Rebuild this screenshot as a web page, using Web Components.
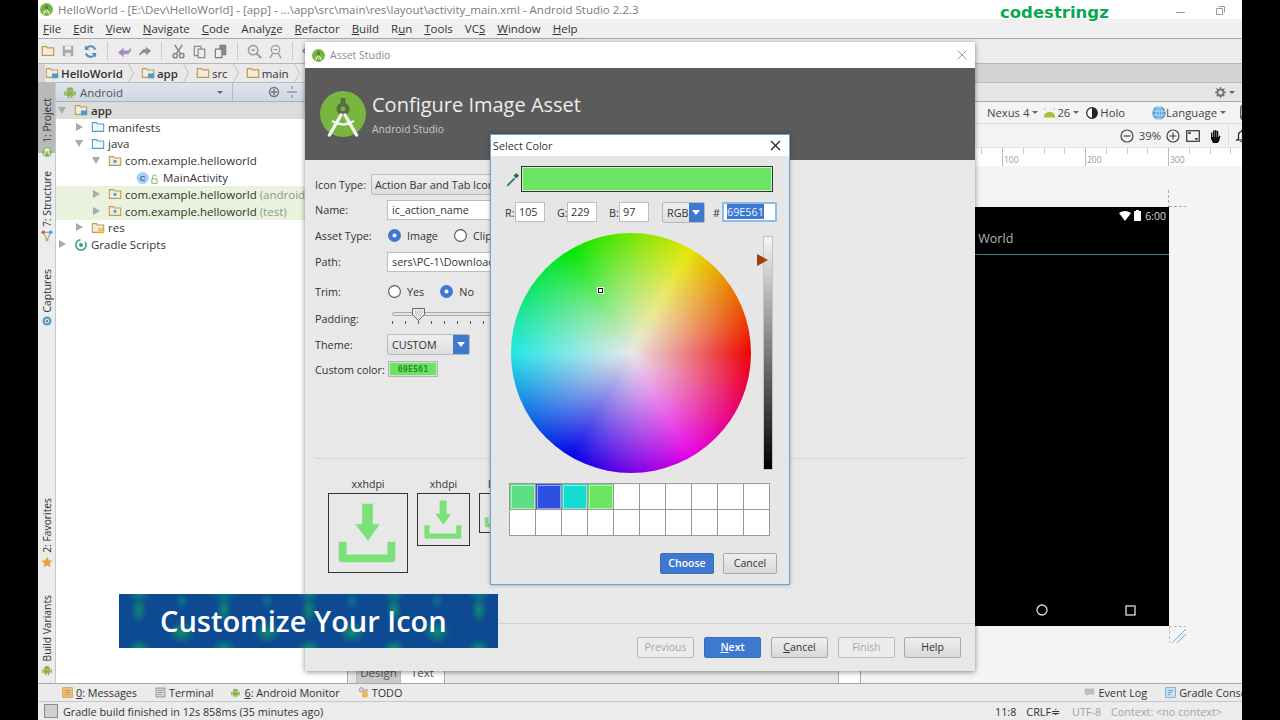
<!DOCTYPE html>
<html>
<head>
<meta charset="utf-8">
<title>Android Studio</title>
<style>
    html, body { margin: 0; height: 720px; overflow: hidden; background: #000; }
    body { font: 11.5px "Open Sans", "Liberation Sans", sans-serif; color: #333; }
    u { text-underline-offset: 1px; }
</style>
</head>
<body>
<android-studio>
    <title-bar>HelloWorld - [E:\Dev\HelloWorld] - [app] - ...\app\src\main\res\layout\activity_main.xml - Android Studio 2.2.3</title-bar>
    <menu-bar>
        <span><u>F</u>ile</span><span><u>E</u>dit</span><span><u>V</u>iew</span><span><u>N</u>avigate</span><span><u>C</u>ode</span><span>Analy<u>z</u>e</span><span><u>R</u>efactor</span><span><u>B</u>uild</span><span>R<u>u</u>n</span><span><u>T</u>ools</span><span>VC<u>S</u></span><span><u>W</u>indow</span><span><u>H</u>elp</span>
    </menu-bar>
    <main-toolbar></main-toolbar>
    <bread-crumbs>
        <crumb-item icon="module" strong>HelloWorld</crumb-item>
        <crumb-item icon="module" strong>app</crumb-item>
        <crumb-item icon="folder">src</crumb-item>
        <crumb-item icon="folder">main</crumb-item>
        <crumb-item icon="res">res</crumb-item>
        <crumb-item icon="package">layout</crumb-item>
    </bread-crumbs>
    <work-area>
        <side-strip side="left">
            <strip-tab side="left" icon="android-gray" selected style="height:70px;padding-top:15px">1: Project</strip-tab>
            <strip-tab side="left" icon="structure" style="margin-top:18px">7: Structure</strip-tab>
            <strip-tab side="left" icon="captures" style="margin-top:27px">Captures</strip-tab>
            <strip-tab side="left" icon="star" style="margin-top:auto">2: Favorites</strip-tab>
            <strip-tab side="left" icon="android" style="margin-top:27px;margin-bottom:7px">Build Variants</strip-tab>
        </side-strip>
        <project-panel>
            <tree-row arrow="down" icon="module" indent="0" selected><b style="font-weight:600">app</b></tree-row>
            <tree-row arrow="right" icon="folder-blue" indent="1">manifests</tree-row>
            <tree-row arrow="down" icon="folder-blue" indent="1">java</tree-row>
            <tree-row arrow="down" icon="package" indent="2">com.example.helloworld</tree-row>
            <tree-row icon="class" indent="3">MainActivity</tree-row>
            <tree-row arrow="right" icon="package" indent="2" tinted>com.example.helloworld <span style="color:#8d9a8d">(androidTest)</span></tree-row>
            <tree-row arrow="right" icon="package" indent="2" tinted>com.example.helloworld <span style="color:#8d9a8d">(test)</span></tree-row>
            <tree-row arrow="right" icon="res" indent="1">res</tree-row>
            <tree-row arrow="right" icon="gradle" indent="0">Gradle Scripts</tree-row>
        </project-panel>
        <xml-editor></xml-editor>
        <layout-designer></layout-designer>
        <side-strip side="right">
            <strip-tab side="right" icon="gradle" light style="height:58px;padding-top:7px">Gradle</strip-tab>
            <strip-tab side="right" icon="android" selected style="height:64px;padding-top:7px">Preview</strip-tab>
            <strip-tab side="right" icon="android" style="margin-top:auto;margin-bottom:9px">Android Model</strip-tab>
        </side-strip>
    </work-area>
    <tool-windows>
        <tool-item icon="messages" style="margin-left:24px"><u>0</u>: Messages</tool-item>
        <tool-item icon="terminal" style="margin-left:18px">Terminal</tool-item>
        <tool-item icon="android" style="margin-left:17px"><u>6</u>: Android Monitor</tool-item>
        <tool-item icon="todo" style="margin-left:18px">TODO</tool-item>
        <tool-item icon="eventlog" style="margin-left:auto">Event Log</tool-item>
        <tool-item icon="console" style="margin-left:18px;margin-right:26px">Gradle Console</tool-item>
    </tool-windows>
    <status-bar>
        <ui-icon name="square" size="14" style="margin:0 5px 0 6px"></ui-icon>
        <span>Gradle build finished in 12s 858ms (35 minutes ago)</span>
        <span style="margin-left:auto">11:8</span>
        <span style="margin-left:10px">CRLF≑</span>
        <span style="margin-left:12px;color:#a3a3a3">UTF-8</span>
        <span style="margin-left:10px;color:#a3a3a3">Context: &lt;no context&gt;</span>
        <ui-icon name="lock-dark" size="11" style="margin-left:23px"></ui-icon>
        <ui-icon name="robot" size="14" style="margin:0 3px 0 9px"></ui-icon>
    </status-bar>
</android-studio>

<asset-studio>
    <form-row label="Icon Type:"><ui-select style="width:190px;margin-left:-16px" plain>Action Bar and Tab Icons</ui-select></form-row>
    <form-row label="Name:"><ui-input style="width:190px">ic_action_name</ui-input></form-row>
    <form-row label="Asset Type:"><ui-radio checked>Image</ui-radio><ui-radio style="margin-left:16px">Clip Art</ui-radio></form-row>
    <form-row label="Path:"><ui-input style="width:190px">sers\PC-1\Downloads\icon.png</ui-input></form-row>
    <form-row label="Trim:"><ui-radio>Yes</ui-radio><ui-radio checked style="margin-left:16px">No</ui-radio></form-row>
    <form-row label="Padding:"><tick-slider></tick-slider></form-row>
    <form-row label="Theme:"><ui-select style="width:83px">CUSTOM</ui-select></form-row>
    <form-row label="Custom color:"><color-chip>69E561</color-chip></form-row>
    <density-previews slot="previews">
        <density-box size="80">xxhdpi</density-box>
        <density-box size="53">xhdpi</density-box>
        <density-box size="40">hdpi</density-box>
    </density-previews>
    <ui-button slot="buttons" disabled style="width:57px"> Previous</ui-button>
    <ui-button slot="buttons" primary style="width:57px;margin-left:10px"><u>N</u>ext</ui-button>
    <ui-button slot="buttons" style="width:57px;margin-left:10px"><u>C</u>ancel</ui-button>
    <ui-button slot="buttons" disabled style="width:57px;margin-left:10px">Finish</ui-button>
    <ui-button slot="buttons" style="width:57px;margin-left:9px">Help</ui-button>
</asset-studio>

<select-color>
    <ui-button slot="buttons" primary style="width:54px">Choose</ui-button>
    <ui-button slot="buttons" style="width:54px;margin-left:9px">Cancel</ui-button>
</select-color>

<title-banner>Customize Your Icon</title-banner>

<script>
const ICONS = {
    logo: `<svg viewBox="0 0 46 46"><circle cx="23" cy="23" r="23" fill="#78b63f"/><circle cx="23" cy="18" r="6.5" fill="#55703f"/><rect x="20.5" y="7" width="5" height="6" fill="#55703f"/><circle cx="23" cy="18" r="2.4" fill="#78b63f"/><path d="M21 24 9.5 44M25 24l11.500 20" stroke="#f2f2f2" stroke-width="3.400" fill="none" stroke-linecap="round"/><path d="M12 30q11 7 22 0" stroke="#f2f2f2" stroke-width="2.400" fill="none"/></svg>`,
    folder: `<svg viewBox="0 0 16 16"><path d="M1.500 3h5l1 1.500h7V13h-13z" fill="#f4ecd8" stroke="#bd9a55" stroke-width="1.400"/></svg>`,
    save: `<svg viewBox="0 0 16 16"><path d="M2 2h12v12H2z" fill="#a9a9a9"/><path d="M4.500 2.500h7v4h-7z" fill="#eee"/><path d="M5 10h6v4H5z" fill="#e6e6e6"/></svg>`,
    sync: `<svg viewBox="0 0 16 16" fill="none" stroke="#4d90c8" stroke-width="2.200"><path d="M13 6a5.500 5.500 0 0 0-9.500-1.500"/><path d="M3 10a5.500 5.500 0 0 0 9.500 1.500"/><path d="M2 1.500v5h5z" fill="#4d90c8" stroke="none"/><path d="M14 14.500v-5H9z" fill="#4d90c8" stroke="none"/></svg>`,
    undo: `<svg viewBox="0 0 16 16"><path d="M1 9l6-5v3h5l3-3v3l-3 4H7v3z" fill="#a78bc4"/></svg>`,
    redo: `<svg viewBox="0 0 16 16"><path d="M15 8 9 3v3H6L1 12l1 1 4-3h3v3z" fill="#8d8d8d"/></svg>`,
    cut: `<svg viewBox="0 0 16 16" fill="none" stroke="#808080" stroke-width="1.500"><path d="M4 1l6 9M12 1 6 10"/><circle cx="4.500" cy="12.500" r="2.300"/><circle cx="11.500" cy="12.500" r="2.300"/></svg>`,
    copy: `<svg viewBox="0 0 16 16" fill="#eee" stroke="#8a8a8a" stroke-width="1.300"><path d="M2.500 2.500h7v10h-7z"/><path d="M6.500 5.500h7v9h-7z"/></svg>`,
    paste: `<svg viewBox="0 0 16 16" stroke="#777" stroke-width="1.200"><path d="M7.500 1.500h6v10h-6z" fill="#9a8a6a"/><path d="M2.500 5.500h7v9h-7z" fill="#eee"/></svg>`,
    find: `<svg viewBox="0 0 16 16" fill="none" stroke="#9a9a9a" stroke-width="1.600"><circle cx="6.500" cy="6.500" r="5"/><path d="M10 10l5 5" stroke-width="2.200"/><path d="M4.500 6.500h4"/></svg>`,
    replace: `<svg viewBox="0 0 16 16" fill="none" stroke="#9a9a9a" stroke-width="1.400"><circle cx="8" cy="6" r="4.500"/><path d="M5 10l-3 5M11 10l3 5M6 6h4"/></svg>`,
    back: `<svg viewBox="0 0 16 16"><path d="M1 8l7-6v3.500h7v5H8V14z" fill="#c5e3f5" stroke="#3f94cf" stroke-width="1.500"/></svg>`,
    forward: `<svg viewBox="0 0 16 16"><path d="M15 8 8 2v3.500H1v5h7V14z" fill="#eee" stroke="#9a9a9a" stroke-width="1.500"/></svg>`,
    search: `<svg viewBox="0 0 16 16" fill="none" stroke="#8a8a8a" stroke-width="1.800"><circle cx="6.500" cy="6.500" r="5"/><path d="M10.500 10.500l4.500 4.500" stroke-width="2.400"/></svg>`,
    avatar: `<svg viewBox="0 0 14 14"><path d="M0 0h14v14H0z" fill="#c9c9c9"/><circle cx="7" cy="5" r="3" fill="#f6f6f6"/><path d="M2 14q0-5 5-5t5 5z" fill="#f6f6f6"/></svg>`,
    module: `<svg viewBox="0 0 16 16"><path d="M1.500 3h5l1 1.500h7V13h-13z" fill="#f4ecd8" stroke="#bd9a55" stroke-width="1.200"/><path d="M8 8.500h7v5.500H8z" fill="#4f9bd0"/></svg>`,
    res: `<svg viewBox="0 0 16 16"><path d="M1.500 3h5l1 1.500h7V13h-13z" fill="#f4ecd8" stroke="#bd9a55" stroke-width="1.200"/><path d="M8.500 8h6v6h-6z" fill="#e5a823"/><path d="M10.500 8v6M12.500 8v6M8.500 10h6M8.500 12h6" stroke="#f9e7b5" stroke-width=".6"/></svg>`,
    "folder-blue": `<svg viewBox="0 0 16 16"><path d="M1.500 3h5l1 1.500h7V13h-13z" fill="#f4f9fc" stroke="#4c9ccb" stroke-width="1.200"/></svg>`,
    package: `<svg viewBox="0 0 16 16"><path d="M1.500 3h5l1 1.500h7V13h-13z" fill="#f4ecd8" stroke="#bd9a55" stroke-width="1.200"/><rect x="6.500" y="7" width="3" height="3" fill="#3f94cf"/></svg>`,
    class: `<svg viewBox="0 0 26 16"><circle cx="8" cy="8" r="7" fill="#a4d2f0"/><text x="8" y="11" font-size="9" font-weight="700" text-anchor="middle" font-family="Liberation Sans" fill="#2c6f9f">C</text><path d="M18.500 9h6v5h-6z" fill="#fff" stroke="#6dac5a"/><path d="M19.500 9V6.500a2 2 0 0 1 4 0" fill="none" stroke="#6dac5a"/></svg>`,
    gradle: `<svg viewBox="0 0 16 16" fill="none"><circle cx="8" cy="8" r="5.800" stroke="#3fae6a" stroke-width="2" stroke-dasharray="26 6"/><circle cx="8" cy="8" r="2.200" fill="#3f8fb0"/></svg>`,
    android: `<svg viewBox="0 0 16 16" fill="#8eb34a"><path d="M4 6.500a4 4 0 0 1 8 0z"/><rect x="4" y="7" width="8" height="5.500"/><rect x="1.500" y="7" width="2" height="5" rx="1"/><rect x="12.500" y="7" width="2" height="5" rx="1"/><rect x="5.200" y="12" width="2" height="3" rx="1"/><rect x="8.800" y="12" width="2" height="3" rx="1"/></svg>`,
    "android-gray": `<svg viewBox="0 0 16 16"><circle cx="8" cy="8" r="6.500" fill="#86b56a"/><path d="M4 7a4 4 0 0 1 8 0z" fill="#e8efe0"/><path d="M4 12 7 7M12 12 9 7" stroke="#e8efe0" stroke-width="1.500"/></svg>`,
    structure: `<svg viewBox="0 0 16 16" fill="none" stroke="#7a8a96" stroke-width="1.200"><path d="M3 3l5 10 5-10z"/><circle cx="3" cy="3" r="2.400" fill="#d65a4a" stroke="none"/><circle cx="13" cy="3" r="2.400" fill="#4f9bd0" stroke="none"/><circle cx="8" cy="13" r="2.400" fill="#e2a23a" stroke="none"/></svg>`,
    captures: `<svg viewBox="0 0 16 16"><circle cx="8" cy="8" r="6" fill="#5a9bc6"/><circle cx="8" cy="8" r="3" fill="#d8e8f2"/><circle cx="8" cy="8" r="1.500" fill="#4a7fa0"/></svg>`,
    star: `<svg viewBox="0 0 16 16"><path d="M8 1l2.200 4.700 5 .6-3.700 3.500 1 5.100L8 12.400l-4.500 2.500 1-5.100L.8 6.300l5-.6z" fill="#e2a13a"/></svg>`,
    messages: `<svg viewBox="0 0 16 16"><rect x="1" y="1" width="14" height="14" fill="#ecc27c" stroke="#c99540"/><path d="M4 5h8M4 8h8M4 11h8" stroke="#b98a40"/></svg>`,
    terminal: `<svg viewBox="0 0 16 16"><rect x="1.500" y="1.500" width="13" height="13" fill="#d8d8d8" stroke="#777"/><path d="M4 5h8M4 8h8M4 11h5" stroke="#888"/></svg>`,
    todo: `<svg viewBox="0 0 16 16"><circle cx="5" cy="4" r="3" fill="#ddd" stroke="#777"/><rect x="6" y="6" width="8" height="9" fill="#e6b25a"/><path d="M6 3h9v3H6z" fill="#bbb"/></svg>`,
    eventlog: `<svg viewBox="0 0 16 16"><path d="M1 2h14v9H7l-3 3v-3H1z" fill="#bdbdbd"/></svg>`,
    console: `<svg viewBox="0 0 16 16"><rect x="1" y="1" width="14" height="14" fill="#cfe3f0" stroke="#4f9bd0"/><path d="M4 5h8M4 8h6M4 11h4" stroke="#5b7f96"/></svg>`,
    square: `<svg viewBox="0 0 14 14"><rect x=".5" y=".5" width="13" height="13" fill="#cfcfcf" stroke="#8a8a8a"/></svg>`,
    "lock-dark": `<svg viewBox="0 0 11 11"><rect x="2" y="5" width="7" height="5.500" fill="#666"/><path d="M3.500 5V3a2 2 0 0 1 4 0" fill="none" stroke="#888"/></svg>`,
    robot: `<svg viewBox="0 0 14 14" fill="none" stroke="#888"><path d="M3.500 5a3.500 3.500 0 0 1 7 0v3h-7z"/><path d="M2 8.500h10v3H2zM5 11.500V14M9 11.500V14"/><path d="M5 5h1M8 5h1" stroke-width="1.500"/></svg>`,
    gear: `<svg viewBox="0 0 16 16"><circle cx="8" cy="8" r="4.500" fill="none" stroke="#777" stroke-width="3"/><path d="M8 0v16M0 8h16M2.300 2.300l11.400 11.400M13.700 2.300 2.300 13.700" stroke="#777" stroke-width="2" stroke-dasharray="3 10"/></svg>`,
    pin: `<svg viewBox="0 0 14 14" fill="none" stroke="#777" stroke-width="1.300"><path d="M1 7h7M6 4.500 8.500 7 6 9.500"/><path d="M12 2v10" stroke-width="2"/></svg>`,
    "android-flat": `<svg viewBox="0 0 16 12" fill="#a6c03a"><path d="M1 12a7 7 0 0 1 14 0z"/><path d="M3 3 1.500 .5M13 3l1.500-2.500" stroke="#a6c03a"/></svg>`,
    holo: `<svg viewBox="0 0 12 12"><circle cx="6" cy="6" r="5.300" fill="#fff" stroke="#222" stroke-width="1.200"/><path d="M6 .7a5.300 5.300 0 0 1 0 10.600z" fill="#222"/></svg>`,
    globe: `<svg viewBox="0 0 14 14" fill="none" stroke="#d8eefa" stroke-width=".8"><circle cx="7" cy="7" r="6.800" fill="#4f9fd8" stroke="none"/><ellipse cx="7" cy="7" rx="3" ry="6.500"/><path d="M7 .5v13M1 5h12M1 9h12"/></svg>`,
    phone: `<svg viewBox="0 0 12 16" fill="none" stroke="#444" stroke-width="1.300"><rect x="1" y="1" width="10" height="14" rx="1.500"/><path d="M1 12.500h10"/></svg>`,
    minus: `<svg viewBox="0 0 14 14" fill="none" stroke="#444" stroke-width="1.200"><circle cx="7" cy="7" r="6"/><path d="M3.500 7h7"/></svg>`,
    plus: `<svg viewBox="0 0 14 14" fill="none" stroke="#444" stroke-width="1.200"><circle cx="7" cy="7" r="6"/><path d="M3.500 7h7M7 3.500v7"/></svg>`,
    fit: `<svg viewBox="0 0 14 14" fill="none" stroke="#333" stroke-width="1.200"><rect x=".7" y="1.700" width="12.600" height="10.600"/><path d="M3 5V4h2M11 9v1H9" stroke-width="1.400"/></svg>`,
    hand: `<svg viewBox="0 0 14 14" fill="#111"><path d="M3 3.500h1.400V8H5V1.500h1.500V8h.4V1h1.500v7h.4V2h1.500v6.500l1-2 1.200.6L11 12.500 9.500 14H5L3 10z"/></svg>`,
    bell: `<svg viewBox="0 0 14 14" fill="none" stroke="#222" stroke-width="1.200"><path d="M3.500 10V6a3.500 3.500 0 0 1 7 0v4l1.500 1H2z"/><path d="M7 .5V2M5.500 12.500h3"/></svg>`,
    eyedrop: `<svg viewBox="0 0 16 16"><path d="M2 14 9.500 6.500l1 1L3 15z" fill="#4d9a72" stroke="#2e6b4e" stroke-width=".8"/><path d="M9 4l3-3 3 3-3 3z" fill="#2e6b4e"/></svg>`
};

function define(name, markup) {
    customElements.define(name, class extends HTMLElement {
        constructor() {
            super();
            this.attachShadow({ mode: "open" }).innerHTML = markup;
        }
    });
}

customElements.define("ui-icon", class extends HTMLElement {
    constructor() {
        super();
        this.attachShadow({ mode: "open" });
    }

    connectedCallback() {
        let size = this.getAttribute("size") || 16;
        this.shadowRoot.innerHTML = `
            <style>
                :host { display: inline-flex; flex: none; width: ${size}px; height: ${size}px; }
                svg { width: 100%; height: 100%; display: block; }
            </style>
            ${ICONS[this.getAttribute("name")] || ""}
        `;
    }
});

define("caret-down", `
    <style>
        :host { display: inline-block; flex: none; width: 0; height: 0; margin-left: 3px;
            border: 3px solid transparent; border-top: 3px solid #666; border-bottom: 0; }
    </style>`);

define("android-studio", `
    <style>
        :host {
            display: grid;
            grid-template-rows: 19px 19px 26px 19px 600px 19px 18px;
            width: 1204px;
            height: 720px;
            margin-left: 38px;
            background: #ececec;
            overflow: hidden;
        }
    </style>
    <slot></slot>`);

define("title-bar", `
    <style>
        :host { display: flex; align-items: center; background: #fff; color: #7a7a7a; padding-left: 2px; position: relative; }
        span { margin-left: 5px; white-space: nowrap; }
        b { position: absolute; left: 962px; top: 3px; font: 700 16.5px "DejaVu Sans", sans-serif; color: #0aa84f; line-height: 20px; }
        .controls { margin-left: auto; display: flex; align-items: center; }
        svg { display: block; }
    </style>
    <ui-icon name="logo" size="13"></ui-icon>
    <span><slot></slot></span>
    <b>codestringz</b>
    <div class="controls">
        <svg width="12" height="12" style="margin-right:29px" stroke="#999" fill="none"><path d="M2 8.500h9"/></svg>
        <svg width="12" height="12" style="margin-right:29px" stroke="#999" fill="#fff"><path d="M3.500 2.500h6v6"/><path d="M1.500 4.500h6v6h-6z"/></svg>
        <svg width="12" height="12" style="margin-right:14px" stroke="#999"><path d="M1 1l10 10M11 1 1 11"/></svg>
    </div>`);

define("menu-bar", `
    <style>
        :host { display: flex; align-items: center; background: #f0f0f0; padding-left: 5px; gap: 10.500px; color: #333; font-size: 11.500px; white-space: nowrap; }
        ::slotted(span) { margin-right: 1.500px; }
    </style>
    <slot></slot>`);

define("main-toolbar", `
    <style>
        :host { display: flex; align-items: center; background: #ececec; border-top: 1px solid #aaa; border-bottom: 1px solid #b5b5b5; padding-left: 3px; gap: 6px; }
        i { width: 1px; height: 18px; background: #ccc; margin: 0 3px; }
        ui-icon { margin-right: 0; }
        .end { margin-left: auto; display: flex; gap: 7px; margin-right: 3px; align-items: center; }
    </style>
    <ui-icon name="folder" size="14"></ui-icon><ui-icon name="save" size="14"></ui-icon><ui-icon name="sync" size="15" style="margin-left:2px"></ui-icon><i></i>
    <ui-icon name="undo" size="15"></ui-icon><ui-icon name="redo" size="14"></ui-icon><i></i>
    <ui-icon name="cut" size="15"></ui-icon><ui-icon name="copy" size="15"></ui-icon><ui-icon name="paste" size="15"></ui-icon><i></i>
    <ui-icon name="find" size="15"></ui-icon><ui-icon name="replace" size="15"></ui-icon><i></i>
    <ui-icon name="back" size="14"></ui-icon><ui-icon name="forward" size="14"></ui-icon>
    <div class="end"><ui-icon name="search" size="14"></ui-icon><ui-icon name="avatar" size="14"></ui-icon></div>`);

define("bread-crumbs", `
    <style>
        :host { display: flex; align-items: center; background: #d4d4d4; border-bottom: 1px solid #bbb; padding-left: 7px; overflow: hidden; }
    </style>
    <slot></slot>`);

customElements.define("crumb-item", class extends HTMLElement {
    constructor() {
        super();
        this.attachShadow({ mode: "open" });
    }

    connectedCallback() {
        let weight = this.hasAttribute("strong") ? 600 : 400;
        this.shadowRoot.innerHTML = `
            <style>
                :host { display: flex; align-items: center; height: 18px; background: #e9e9e9; padding-right: 3px; white-space: nowrap; }
                span { font-weight: ${weight}; margin-left: 2px; }
                svg { margin-left: 5px; margin-right: 4px; }
            </style>
            <ui-icon name="${this.getAttribute("icon")}" size="14"></ui-icon>
            <span><slot></slot></span>
            <svg width="6" height="18" fill="none" stroke="#c2c2c2"><path d="M.500 0l5 9-5 9"/></svg>
        `;
    }
});

define("work-area", `
    <style>
        :host { display: flex; min-height: 0; background: #fff; }
    </style>
    <slot></slot>`);

customElements.define("side-strip", class extends HTMLElement {
    constructor() {
        super();
        this.attachShadow({ mode: "open" });
    }

    connectedCallback() {
        let edge = this.getAttribute("side") == "left" ? "right" : "left";
        this.shadowRoot.innerHTML = `
            <style>
                :host { display: flex; flex-direction: column; flex: none; width: 18px; background: #ececec; border-${edge}: 1px solid #c8c8c8; box-sizing: border-box; }
            </style>
            <slot></slot>
        `;
    }
});

customElements.define("strip-tab", class extends HTMLElement {
    constructor() {
        super();
        this.attachShadow({ mode: "open" });
    }

    connectedCallback() {
        let left = this.getAttribute("side") == "left";
        let bg = this.hasAttribute("selected") ? "#b9b9b9" : this.hasAttribute("light") ? "#f4f4f4" : "transparent";
        this.shadowRoot.innerHTML = `
            <style>
                :host { display: flex; flex-direction: ${left ? "column" : "column-reverse"}; justify-content: ${left ? "flex-start" : "flex-end"}; align-items: center; gap: 3px; background: ${bg}; font-size: 10.300px; color: #333; flex: none; box-sizing: border-box; }
                span { writing-mode: vertical-rl; ${left ? "transform: rotate(180deg);" : ""} white-space: nowrap; line-height: 14px; }
            </style>
            <span><slot></slot></span>
            <ui-icon name="${this.getAttribute("icon")}" size="12"></ui-icon>
        `;
    }
});

define("project-panel", `
    <style>
        :host { display: flex; flex-direction: column; flex: none; width: 291px; background: #fff; overflow: hidden; }
        header { display: flex; align-items: center; height: 19px; flex: none; box-sizing: border-box; border-bottom: 1px solid #a9b0ba; background: linear-gradient(#dde4ee, #cfd7e2); color: #555; padding-left: 7px; }
        span { margin-left: 3px; width: 134px; }
        i { width: 1px; height: 18px; background: #b4bcc8; margin: 0 35px 0 9px; }
    </style>
    <header>
        <ui-icon name="android" size="14"></ui-icon>
        <span>Android</span>
        <caret-down></caret-down>
        <i></i>
        <svg width="12" height="12" fill="none" stroke="#777" stroke-width="1.500"><circle cx="6" cy="6" r="4.500"/><path d="M6 3v6M3 6h6" stroke="#777"/></svg>
        <svg width="12" height="12" fill="none" stroke="#777" style="margin-left:6px"><path d="M1 6h10M6 0v3M6 9v3"/></svg>
    </header>
    <slot></slot>`);

customElements.define("tree-row", class extends HTMLElement {
    constructor() {
        super();
        this.attachShadow({ mode: "open" });
    }

    connectedCallback() {
        let indent = parseInt(this.getAttribute("indent"));
        let arrow = this.getAttribute("arrow");
        let bg = this.hasAttribute("selected") ? "#dcdcdc" : this.hasAttribute("tinted") ? "#e8f2dc" : "transparent";
        let glyph = arrow == "down" ? "M0 1h8L4 8z" : arrow == "right" ? "M1 0l7 4-7 4z" : "";
        let icon = this.getAttribute("icon");
        let iconWidth = icon == "class" ? 26 : 14;
        this.shadowRoot.innerHTML = `
            <style>
                :host { display: flex; align-items: center; height: 16.800px; flex: none; background: ${bg}; padding-left: ${2 + indent * 17}px; white-space: nowrap; color: #333; }
                svg { flex: none; margin-right: ${icon == "class" ? 17 : 8}px; }
                span { margin-left: 3px; }
            </style>
            <svg width="8" height="9" fill="${arrow == "down" ? "#aaa" : "#aaa"}"><path d="${glyph}"/></svg>
            <ui-icon name="${icon}" size="14" style="width:${iconWidth}px"></ui-icon>
            <span><slot></slot></span>
        `;
    }
});

define("xml-editor", `
    <style>
        :host { display: flex; flex-direction: column; flex: none; width: 514px; box-sizing: border-box; border-left: 1px solid #aaa; border-right: 1px solid #aaa; background: #fff; }
        .code { flex: 1; }
        .tabs { display: flex; height: 19px; background: #e8e8e8; padding-left: 8px; box-sizing: border-box; border-right: 1px solid #aaa; margin-right: 21px; }
        .tabs span { width: 43px; text-align: center; line-height: 17px; color: #555; }
        .tabs .on { background: #c9c9c9; border: solid #bbb; border-width: 0 1px; }
        .tabs .off { background: #fff; border-right: 1px solid #aaa; }
    </style>
    <div class="code"></div>
    <div class="tabs"><span class="on">Design</span><span class="off">Text</span></div>`);

define("layout-designer", `
    <style>
        :host { display: flex; flex-direction: column; flex: 1; min-width: 0; background: #f4f4f4; overflow: hidden; font-size: 11.300px; color: #444; }
        .top { display: flex; align-items: center; justify-content: flex-end; height: 19px; flex: none; box-sizing: border-box; background: #e6e6e6; border-bottom: 1px solid #aaa; padding-right: 6px; gap: 12px; }
        .row { display: flex; align-items: center; justify-content: flex-end; flex: none; background: #f3f3f3; white-space: nowrap; }
        .devices { height: 22px; border-bottom: 1px solid #d9d9d9; box-sizing: border-box; padding-right: 1px; }
        .zoom { height: 24px; padding-right: 15px; border-bottom: 1px solid #e0e0e0; box-sizing: border-box; }
        .sep { width: 1px; height: 20px; background: #ddd; }
        design-ruler { margin-right: 13px; }
        .canvas { flex: 1; position: relative; padding-top: 41px; }
    </style>
    <div class="top">
        <span style="display:flex;align-items:center"><ui-icon name="gear" size="11"></ui-icon><caret-down></caret-down></span>
        <ui-icon name="pin" size="11"></ui-icon>
    </div>
    <div class="row devices">
        <span>Nexus 4</span><caret-down></caret-down>
        <ui-icon name="android-flat" size="13" style="margin-left:5px"></ui-icon><span style="margin-left:1px">26</span><caret-down></caret-down>
        <ui-icon name="holo" size="12" style="margin-left:7px"></ui-icon><span style="margin-left:2px">Holo</span>
        <ui-icon name="globe" size="14" style="margin-left:27px"></ui-icon><span>Language</span><caret-down></caret-down>
        <ui-icon name="phone" size="15" style="margin-left:12px"></ui-icon><caret-down style="margin-left:4px"></caret-down>
    </div>
    <div class="row zoom">
        <ui-icon name="minus" size="14"></ui-icon><span style="margin:0 5px">39%</span><ui-icon name="plus" size="14"></ui-icon>
        <ui-icon name="fit" size="14" style="margin-left:6px"></ui-icon><ui-icon name="hand" size="14" style="margin-left:8px"></ui-icon>
        <i class="sep" style="margin:0 6px"></i><ui-icon name="bell" size="14"></ui-icon>
    </div>
    <design-ruler></design-ruler>
    <div class="canvas">
        <phone-preview>Hello World</phone-preview>
        <svg width="20" height="40" style="position:absolute;left:307px;top:24px" fill="none" stroke="#aaa" stroke-dasharray="3 2"><path d="M.500 0v17M1 16.500h17"/></svg>
        <svg width="20" height="20" style="position:absolute;left:308px;top:460px" fill="none"><path d="M0 .500h17M.500 0v17" stroke="#bbb" stroke-dasharray="3 2"/><path d="M3 17 17 3M8 17l9-9" stroke="#6db4dc"/></svg>
    </div>`);

define("design-ruler", `
    <style>
        :host { display: flex; flex: none; height: 18px; box-sizing: border-box; padding-left: 58px; overflow: hidden; font-size: 8.500px; color: #999;
            background: repeating-linear-gradient(90deg, #ccc 0 1px, transparent 1px 20.750px) 58px 0 / 100% 6px no-repeat #fff; }
        span { flex: none; width: 83px; box-sizing: border-box; border-left: 1px solid #bbb; padding: 6px 0 0 1px; line-height: 12px; }
    </style>
    <span></span><span>100</span><span>200</span><span>300</span>`);

define("phone-preview", `
    <style>
        :host { display: flex; flex-direction: column; width: 308px; height: 419px; background: #000; color: #fff; }
        .status { display: flex; align-items: center; justify-content: flex-end; height: 17px; font-size: 10.500px; padding-right: 3px; color: #ddd; gap: 3px; }
        .bar { height: 30px; line-height: 30px; padding-left: 84px; font-size: 12.500px; color: #b5b5b5; border-bottom: 1px solid #3e7f90; }
        .body { flex: 1; }
        .nav { display: flex; align-items: center; height: 32px; padding-left: 175px; gap: 77px; }
    </style>
    <div class="status">
        <svg width="12" height="10" fill="#fff"><path d="M0 2q6-4 12 0L6 10z"/></svg>
        <svg width="7" height="11" fill="#fff"><path d="M2 0h3v1h2v10H0V1h2z"/></svg>
        <span style="margin-left:1px">6:00</span>
    </div>
    <div class="bar"><slot></slot></div>
    <div class="body"></div>
    <div class="nav">
        <svg width="12" height="12" fill="none" stroke="#ddd" stroke-width="1.300"><circle cx="6" cy="6" r="5"/></svg>
        <svg width="11" height="11" fill="none" stroke="#ddd" stroke-width="1.300"><rect x="1" y="1" width="9" height="9"/></svg>
    </div>`);

define("tool-windows", `
    <style>
        :host { display: flex; align-items: center; background: #ebebeb; border-top: 1px solid #a8a8a8; border-bottom: 1px solid #c8c8c8; box-sizing: border-box; font-size: 10.800px; }
    </style>
    <slot></slot>`);

customElements.define("tool-item", class extends HTMLElement {
    constructor() {
        super();
        this.attachShadow({ mode: "open" });
    }

    connectedCallback() {
        this.shadowRoot.innerHTML = `
            <style>
                :host { display: flex; align-items: center; gap: 3px; white-space: nowrap; }
            </style>
            <ui-icon name="${this.getAttribute("icon")}" size="11"></ui-icon>
            <span><slot></slot></span>
        `;
    }
});

define("status-bar", `
    <style>
        :host { display: flex; align-items: center; background: #ececec; font-size: 10.800px; white-space: nowrap; }
    </style>
    <slot></slot>`);

define("asset-studio", `
    <style>
        :host { position: absolute; left: 305px; top: 42px; width: 670px; height: 629px; display: flex; flex-direction: column; background: #e8e8e8; box-shadow: 0 1px 5px rgba(0,0,0,.45); overflow: hidden; }
        .title { display: flex; align-items: center; height: 26px; flex: none; background: #fff; padding-left: 7px; color: #8c8c8c; font-size: 10.500px; gap: 5px; }
        .title svg { margin-left: auto; margin-right: 7px; }
        .head { display: flex; align-items: center; height: 92px; flex: none; background: #5b5b5b; padding-left: 15px; gap: 6px; color: #eee; }
        h1 { margin: 0; font: 400 20px/24px "Open Sans", sans-serif; color: #ededed; }
        p { margin: 5px 0 0; font-size: 10.300px; color: #c9c9c9; line-height: 14px; }
        .form { display: grid; grid-template-rows: 25px 25px 27px 25px 35px 19px 33px 16px; padding: 12px 0 0 10px; flex: none; height: 205px; }
        hr { margin: 81px 10px 0; border: 0; border-top: 1px solid #d6d6d6; flex: none; }
        .previews { padding: 18px 0 0 23px; height: 148px; box-sizing: border-box; flex: none; }
        .buttons { display: flex; align-items: center; justify-content: flex-end; height: 48px; flex: none; border-top: 1px solid #d0d0d0; padding-right: 14px; margin-top: 16px; box-sizing: border-box; padding-bottom: 0; }
    </style>
    <div class="title">
        <ui-icon name="logo" size="13"></ui-icon><span>Asset Studio</span>
        <svg width="12" height="12" stroke="#999"><path d="M1.500 1.500l9 9M10.500 1.500l-9 9"/></svg>
    </div>
    <div class="head">
        <ui-icon name="logo" size="46"></ui-icon>
        <div><h1>Configure Image Asset</h1><p>Android Studio</p></div>
    </div>
    <div class="form"><slot></slot></div>
    <hr>
    <div class="previews"><slot name="previews"></slot></div>
    <div class="buttons"><slot name="buttons"></slot></div>`);

customElements.define("form-row", class extends HTMLElement {
    constructor() {
        super();
        this.attachShadow({ mode: "open" });
    }

    connectedCallback() {
        this.shadowRoot.innerHTML = `
            <style>
                :host { display: flex; align-items: center; white-space: nowrap; font-size: 10.800px; color: #333; }
                label { flex: none; width: 72px; }
            </style>
            <label>${this.getAttribute("label")}</label>
            <slot></slot>
        `;
    }
});

define("ui-input", `
    <style>
        :host { display: block; flex: none; height: 20px; line-height: 18px; box-sizing: border-box; background: #fff; border: 1px solid #bdbdbd; padding: 0 4px; color: #333; white-space: nowrap; overflow: hidden; font-size: 10.800px; }
    </style>
    <slot></slot>`);

customElements.define("ui-select", class extends HTMLElement {
    constructor() {
        super();
        this.attachShadow({ mode: "open" });
    }

    connectedCallback() {
        let plain = this.hasAttribute("plain");
        this.shadowRoot.innerHTML = `
            <style>
                :host { display: flex; flex: none; height: 21px; box-sizing: border-box; background: linear-gradient(#efefef, #dedede); border: 1px solid #b8b8b8; border-radius: 2px; color: #333; overflow: hidden; white-space: nowrap; font-size: 10.800px; }
                span { flex: 1; line-height: 19px; padding-left: ${plain ? 3 : 4}px; }
                i { width: 16px; background: #3f78cf; display: flex; align-items: center; justify-content: center; }
                i::after { content: ""; border: 4px solid transparent; border-top: 5px solid #fff; border-bottom: 0; }
            </style>
            <span><slot></slot></span><i></i>
        `;
    }
});

customElements.define("ui-radio", class extends HTMLElement {
    constructor() {
        super();
        this.attachShadow({ mode: "open" });
    }

    connectedCallback() {
        let mark = this.hasAttribute("checked")
            ? `<circle cx="6.500" cy="6.500" r="6.500" fill="#3f78cf"/><circle cx="6.500" cy="6.500" r="2" fill="#fff"/>`
            : `<circle cx="6.500" cy="6.500" r="5.900" fill="#fff" stroke="#555" stroke-width="1.100"/>`;
        this.shadowRoot.innerHTML = `
            <style>
                :host { display: inline-flex; flex: none; align-items: center; gap: 6px; margin-left: 1px; }
                svg { flex: none; }
            </style>
            <svg width="13" height="13">${mark}</svg>
            <span><slot></slot></span>
        `;
    }
});

define("tick-slider", `
    <style>
        :host { display: block; flex: none; position: relative; width: 110px; height: 19px; margin-left: 5px; }
        .track { position: absolute; left: 0; right: 0; top: 3px; height: 4px; background: #e4e4e4; border: 1px solid #a8a8a8; border-radius: 2px; box-sizing: border-box; }
        .ticks { position: absolute; left: 0; top: 12px; width: 100%; height: 3px; background: repeating-linear-gradient(90deg, #555 0 1px, transparent 1px 13px); }
        svg { position: absolute; left: 20px; top: -1px; }
    </style>
    <div class="track"></div>
    <div class="ticks"></div>
    <svg width="13" height="13"><path d="M.500.500h12v6L6.500 12.500l-6-6z" fill="#e8e8e8" stroke="#666"/><path d="M3 3h7M3 5h7M4 7h5" stroke="#aaa" stroke-dasharray="1 1"/></svg>`);

define("color-chip", `
    <style>
        :host { display: block; flex: none; width: 50px; height: 16px; box-sizing: border-box; margin-left: 1px; background: #69e561; border: 1px solid #b4b4b4; outline: 1px solid #dcdcdc; outline-offset: -2px; font: 700 8.500px/14px "DejaVu Sans Mono", monospace; color: #2e8a2a; text-align: center; }
    </style>
    <slot></slot>`);

define("density-previews", `
    <style>
        :host { display: flex; align-items: flex-start; gap: 9px; }
    </style>
    <slot></slot>`);

customElements.define("density-box", class extends HTMLElement {
    constructor() {
        super();
        this.attachShadow({ mode: "open" });
    }

    connectedCallback() {
        let size = this.getAttribute("size");
        this.shadowRoot.innerHTML = `
            <style>
                :host { display: flex; flex-direction: column; align-items: center; flex: none; width: ${size}px; font-size: 10.500px; color: #333; }
                span { line-height: 14px; height: 16px; }
                div { width: 100%; height: ${size}px; box-sizing: border-box; border: 1px solid #333; }
                svg { display: block; width: 100%; height: 100%; }
            </style>
            <span><slot></slot></span>
            <div><svg viewBox="0 0 80 80" fill="#7be27a"><path d="M34 10h11v21h7L40 48 27 31h7z"/><path d="M10 49h8v13h42V49h8v18a3 3 0 0 1-3 3H13a3 3 0 0 1-3-3z"/></svg></div>
        `;
    }
});

customElements.define("ui-button", class extends HTMLElement {
    constructor() {
        super();
        this.attachShadow({ mode: "open" });
    }

    connectedCallback() {
        let look = "background: linear-gradient(#efefef, #d8d8d8); border-color: #a9a9a9; color: #333;";
        if (this.hasAttribute("primary")) look = "background: #3f78cf; border-color: #3a6fbe; color: #fff; font-weight: 600;";
        if (this.hasAttribute("disabled")) look = "background: #ececec; border-color: #b9b9b9; color: #a8a8a8;";
        this.shadowRoot.innerHTML = `
            <style>
                :host { display: block; flex: none; height: 21px; line-height: 19px; box-sizing: border-box; border: 1px solid; border-radius: 2px; text-align: center; font-size: 10.500px; ${look} }
            </style>
            <slot></slot>
        `;
    }
});

define("select-color", `
    <style>
        :host { position: absolute; left: 490px; top: 134px; width: 300px; height: 451px; box-sizing: border-box; display: flex; flex-direction: column; background: #e6e6e6; border: 1px solid #6da3d2; box-shadow: 0 0 4px rgba(0,0,0,.3); font-size: 10.800px; color: #333; }
        .title { display: flex; align-items: center; justify-content: space-between; height: 21px; flex: none; background: #fff; padding: 0 8px 0 2px; }
        .swatch { display: flex; align-items: center; margin: 10px 16px 0 14px; gap: 1px; }
        .preview { flex: 1; height: 26px; box-sizing: border-box; background: #69e561; border: 1px solid #333; outline: 1px solid #c9f3c6; outline-offset: -2px; }
        .rgb { display: flex; align-items: center; height: 20px; margin: 10px 0 0 14px; }
        .rgb label { width: 10px; }
        .rgb ui-input { width: 30px; margin-right: 12px; padding: 0 3px; }
        .rgb ui-select { width: 43px; margin-left: 1px; }
        .hash { margin: 0 2px 0 8px; }
        .hex { width: 55px; height: 20px; line-height: 16px; box-sizing: border-box; background: #fff; border: 2px solid #8fbbe8; padding-left: 3px; }
        .hex mark { background: #3f78cf; color: #e8f0ff; }
        .picker { display: flex; margin: 11px 0 0 20px; height: 250px; position: relative; }
        .shade { margin: 3px 0 0 12px; width: 10px; height: 234px; box-sizing: border-box; border: 1px solid #c4c4c4; background: linear-gradient(#f4f4f4, #000); position: relative; }
        .shade svg { position: absolute; left: -7px; top: 17px; }
        swatch-grid { margin: 0 0 0 18px; }
        .buttons { display: flex; justify-content: flex-end; margin: 17px 12px 0 0; }
    </style>
    <div class="title"><span>Select Color</span><svg width="11" height="11" stroke="#222" stroke-width="1.200"><path d="M1 1l9 9M10 1l-9 9"/></svg></div>
    <div class="swatch"><ui-icon name="eyedrop" size="15"></ui-icon><div class="preview"></div></div>
    <div class="rgb">
        <label>R:</label><ui-input>105</ui-input>
        <label>G:</label><ui-input>229</ui-input>
        <label>B:</label><ui-input>97</ui-input>
        <ui-select>RGB</ui-select>
        <span class="hash">#</span>
        <div class="hex"><mark>69E561</mark></div>
    </div>
    <div class="picker">
        <color-wheel></color-wheel>
        <div class="shade"><svg width="11" height="12"><path d="M0 0l11 6-11 6z" fill="#a23d10"/></svg></div>
    </div>
    <swatch-grid></swatch-grid>
    <div class="buttons"><slot name="buttons"></slot></div>`);

define("color-wheel", `
    <style>
        :host { display: block; flex: none; width: 240px; height: 240px; position: relative; border-radius: 50%;
            background:
                radial-gradient(closest-side, rgba(232,232,232,1) 0, rgba(236,236,236,.55) 45%, rgba(255,255,255,0) 100%),
                conic-gradient(from 90deg, #ee0000, #e600e6, #0000e6, #22e6e6, #00e600, #e6e600, #ee0000); }
        i { position: absolute; left: 87px; top: 55px; width: 3px; height: 3px; border: 1px solid #111; outline: 1px solid #fff; background: #fff; }
    </style>
    <i></i>`);

customElements.define("swatch-grid", class extends HTMLElement {
    constructor() {
        super();
        this.attachShadow({ mode: "open" });
        let colors = ["#5fde88", "#2f4fe0", "#14dcd0", "#69e561"];
        let cells = "";
        for (let i = 0; i < 20; i++) {
            cells += `<i style="background:${colors[i] || "#fff"}"></i>`;
        }
        this.shadowRoot.innerHTML = `
            <style>
                :host { display: grid; grid-template-columns: repeat(10, 26px); grid-auto-rows: 26px; width: 261px; box-sizing: border-box; border: solid #999; border-width: 1px 0 0 1px; }
                i { display: block; box-sizing: border-box; border: solid #999; border-width: 0 1px 1px 0; outline: 1px solid rgba(255,255,255,.5); outline-offset: -2px; }
            </style>
            ${cells}
        `;
    }
});

define("title-banner", `
    <style>
        :host { position: absolute; left: 119px; top: 594px; width: 379px; height: 54px; box-sizing: border-box; padding-left: 41px; font: 600 29px/54px "Open Sans", sans-serif; color: #fff; white-space: nowrap;
            background-color: #0d4a92;
            background-image:
                radial-gradient(ellipse 8px 14px at 20px 16px, #0f8a72, rgba(15,138,114,0)),
                radial-gradient(ellipse 12px 9px at 20px 54px, #0f8a72, rgba(15,138,114,0)),
                radial-gradient(ellipse 12px 9px at 20px 0, #0c7a80, rgba(15,138,114,0)),
                radial-gradient(ellipse 14px 12px at 63px 38px, #0f8a72, rgba(15,138,114,0)),
                radial-gradient(ellipse 7px 9px at 63px 7px, #0c6f88, rgba(15,138,114,0));
            background-size: 85px 54px; }
    </style>
    <slot></slot>`);
</script>
</body>
</html>
